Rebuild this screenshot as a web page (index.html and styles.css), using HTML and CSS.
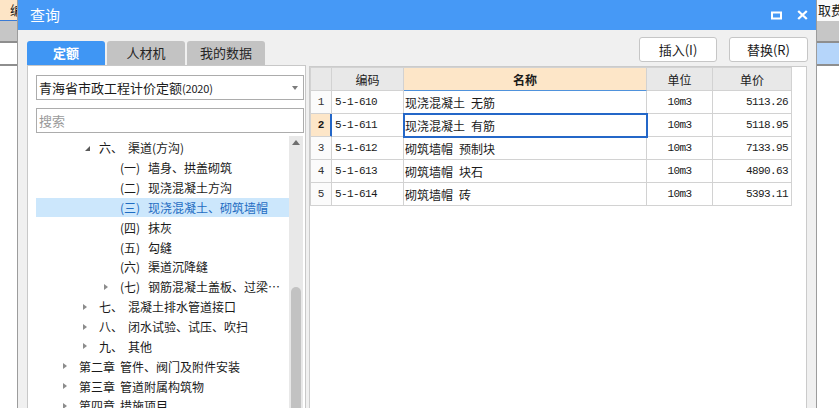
FILE: index.html
```html
<!DOCTYPE html>
<html lang="zh-CN">
<head>
<meta charset="utf-8">
<title>查询</title>
<link rel="stylesheet" href="styles.css">
</head>
<body>
<div class="app">
  <div class="app-head">
    <span class="app-head-l">编</span>
    <span class="app-head-r">取费</span>
  </div>
  <div class="app-band"></div>
  <div class="app-row"><span class="app-row-l"></span><span class="app-row-r"></span></div>
  <div class="app-rest"></div>
</div>

<div class="dialog">
  <div class="titlebar">
    <span class="title">查询</span>
    <span class="tb-icons">
      <svg class="ic-max" width="11" height="9" viewBox="0 0 11 9"><rect x="1" y="1.5" width="9" height="6" fill="none" stroke="#fff" stroke-width="2"/></svg>
      <svg class="ic-close" width="11" height="10" viewBox="0 0 11 10"><path d="M1.2 1 L9.8 9 M9.8 1 L1.2 9" stroke="#fff" stroke-width="2.3" fill="none"/></svg>
    </span>
  </div>
  <div class="dlg-body">
    <div class="toolbar">
      <div class="tabs">
        <div class="tab active">定额</div>
        <div class="tab">人材机</div>
        <div class="tab">我的数据</div>
      </div>
      <div class="buttons">
        <button class="btn btn-ins">插入(I)</button>
        <button class="btn btn-rep">替换(R)</button>
      </div>
    </div>
    <div class="main">
      <div class="left">
        <div class="combo"><span>青海省市政工程计价定额<span class="yr">(2020)</span></span><span class="caret"></span></div>
        <div class="search">搜索</div>
        <div class="tree-wrap">
          <ul class="tree">
            <li class="lv1"><span class="arr open"></span><span class="num">六、</span><span>渠道(方沟)</span></li>
            <li class="lv2"><span class="arr"></span><span class="num">(一)</span><span>墙身、拱盖砌筑</span></li>
            <li class="lv2"><span class="arr"></span><span class="num">(二)</span><span>现浇混凝土方沟</span></li>
            <li class="lv2 hl"><span class="arr"></span><span class="num">(三)</span><span>现浇混凝土、砌筑墙帽</span></li>
            <li class="lv2"><span class="arr"></span><span class="num">(四)</span><span>抹灰</span></li>
            <li class="lv2"><span class="arr"></span><span class="num">(五)</span><span>勾缝</span></li>
            <li class="lv2"><span class="arr"></span><span class="num">(六)</span><span>渠道沉降缝</span></li>
            <li class="lv2"><span class="arr closed"></span><span class="num">(七)</span><span>钢筋混凝土盖板、过梁…</span></li>
            <li class="lv1"><span class="arr closed"></span><span class="num">七、</span><span>混凝土排水管道接口</span></li>
            <li class="lv1"><span class="arr closed"></span><span class="num">八、</span><span>闭水试验、试压、吹扫</span></li>
            <li class="lv1"><span class="arr closed"></span><span class="num">九、</span><span>其他</span></li>
            <li class="lv0"><span class="arr closed"></span><span class="num">第二章</span><span>管件、阀门及附件安装</span></li>
            <li class="lv0"><span class="arr closed"></span><span class="num">第三章</span><span>管道附属构筑物</span></li>
            <li class="lv0"><span class="arr closed"></span><span class="num">第四章</span><span>措施项目</span></li>
          </ul>
          <div class="scrollbar"><span class="up"></span><span class="thumb"></span></div>
        </div>
      </div>
      <div class="right">
        <table class="grid">
          <colgroup><col class="c-no"><col class="c-code"><col class="c-name"><col class="c-unit"><col class="c-price"></colgroup>
          <thead>
            <tr><th></th><th>编码</th><th class="sel">名称</th><th>单位</th><th>单价</th></tr>
          </thead>
          <tbody>
            <tr><td class="no">1</td><td class="code">5-1-610</td><td class="name">现浇混凝土&#8194;无筋</td><td class="unit">10m3</td><td class="price">5113.26</td></tr>
            <tr class="cur"><td class="no">2</td><td class="code">5-1-611</td><td class="name selcell">现浇混凝土&#8194;有筋</td><td class="unit">10m3</td><td class="price">5118.95</td></tr>
            <tr><td class="no">3</td><td class="code">5-1-612</td><td class="name">砌筑墙帽&#8194;预制块</td><td class="unit">10m3</td><td class="price">7133.95</td></tr>
            <tr><td class="no">4</td><td class="code">5-1-613</td><td class="name">砌筑墙帽&#8194;块石</td><td class="unit">10m3</td><td class="price">4890.63</td></tr>
            <tr><td class="no">5</td><td class="code">5-1-614</td><td class="name">砌筑墙帽&#8194;砖</td><td class="unit">10m3</td><td class="price">5393.11</td></tr>
          </tbody>
        </table>
      </div>
    </div>
  </div>
</div>
</body>
</html>
```

FILE: styles.css
```css
* { box-sizing: border-box; margin: 0; padding: 0; }
html, body { width: 839px; height: 408px; overflow: hidden; }
body {
  position: relative;
  background: #fff;
  color: #1a1a1a;
  font-family: "Noto Sans CJK SC", "Noto Sans", sans-serif;
  font-size: 12px;
}

/* background application */
.app { display: flex; flex-direction: column; height: 408px; }
.app-head { display: flex; height: 21px; }
.app-head-l {
  width: 17px; background: #fde5c6; border-bottom: 1px solid #3a7bd5;
  font-size: 13px; line-height: 20px; padding-left: 10px; white-space: nowrap; overflow: hidden;
}
.app-head-r {
  margin-left: auto; width: 22px; overflow: hidden; white-space: nowrap;
  font-size: 13px; line-height: 20px; padding-left: 1px; background: #fafafa;
}
.app-band { height: 22px; background: #c6c6c6; border-bottom: 2px solid #8e8e8e; }
.app-row { display: flex; height: 23px; border-bottom: 2px solid #8e8e8e; }
.app-row-l { flex: 1; background: #fff; }
.app-row-r { width: 22px; background: #b5d5fa; }
.app-rest { flex: 1; background: #fff; }

/* dialog window */
.dialog {
  position: absolute; left: 17px; top: 0;
  width: 800px; height: 420px;
  border: 1px solid #9c9c9c; border-top: 0;
  background: #f0f0f0;
  display: flex; flex-direction: column;
}
.titlebar {
  height: 30px; flex: none;
  background: #4699f6; color: #fff;
  display: flex; align-items: center;
  padding: 0 8px 0 12px;
}
.title { font-size: 15px; line-height: 30px; }
.tb-icons { margin-left: auto; display: flex; align-items: center; gap: 15px; }

.dlg-body { flex: 1; display: flex; flex-direction: column; }
.toolbar {
  height: 35px; flex: none;
  display: flex; justify-content: space-between;
  padding: 0 8px 0 9px;
}
.tabs { display: flex; gap: 2px; align-self: flex-end; }
.tab {
  width: 78px; height: 24px;
  border-radius: 3px 3px 0 0;
  background: #c3c3c3; color: #262626;
  font-size: 13px; line-height: 24px; text-align: center;
}
.tab.active { background: #3f96f4; color: #fff; font-weight: bold; }
.buttons { display: flex; gap: 12px; margin-top: 7px; }
.btn {
  height: 25px; width: 78px;
  background: #fff; border: 1px solid #c6c6c6; border-radius: 3px;
  font-family: inherit; font-size: 13px; color: #1a1a1a;
}
.btn-rep { width: 79px; }

.main { flex: 1; display: flex; gap: 3px; padding: 0 9px; min-height: 0; }

/* left tree panel */
.left {
  width: 279px; flex: none;
  background: #fff; border: 1px solid #c8c8c8; border-bottom: 0;
  padding: 9px 1px 0 8px;
  display: flex; flex-direction: column;
}
.combo {
  height: 25px; border: 1px solid #acacac;
  display: flex; align-items: center; justify-content: space-between;
  padding: 0 5px 0 2px;
  font-size: 13px; color: #1a1a1a;
}
.yr { font-size: 11px; letter-spacing: -0.2px; }
.caret {
  width: 0; height: 0;
  border-top: 4px solid #7c7c7c;
  border-left: 3.5px solid transparent; border-right: 3.5px solid transparent;
}
.search {
  height: 25px; margin-top: 8px; border: 1px solid #acacac;
  padding-left: 2px; font-size: 13px; line-height: 23px; color: #9a9a9a;
}
.tree-wrap { flex: 1; display: flex; margin-top: 3px; min-height: 0; }
.tree { list-style: none; width: 253px; padding-top: 2px; }
.tree li {
  height: 19.85px; display: flex; align-items: center; white-space: nowrap;
  font-size: 12px; color: #1a1a1a;
}
.tree li.lv0 { padding-left: 27px; }
.tree li.lv1 { padding-left: 47px; }
.tree li.lv2 { padding-left: 68px; }
.tree li.hl { background: #cce7fc; color: #1e6cc2; }
.arr { width: 16px; flex: none; display: flex; align-items: center; }
.arr.closed::before {
  content: ""; width: 0; height: 0;
  border-left: 4px solid #8c8c8c;
  border-top: 3.5px solid transparent; border-bottom: 3.5px solid transparent;
}
.arr.open::before {
  content: ""; width: 0; height: 0; margin-left: 2px; margin-top: 2px;
  border-bottom: 5px solid #5a5a5a; border-left: 5px solid transparent;
}
.lv0 .num { width: 41px; }
.lv1 .num { width: 29px; }
.lv2 .num { width: 28px; }
.num { display: inline-block; flex: none; }

.scrollbar {
  width: 14px; flex: none; background: #e8e8e8;
  display: flex; flex-direction: column; align-items: center;
}
.scrollbar .up {
  margin-top: 4px; width: 0; height: 0;
  border-bottom: 5px solid #6e6e6e;
  border-left: 4px solid transparent; border-right: 4px solid transparent;
}
.scrollbar .thumb {
  margin-top: 142px; width: 10px; height: 200px;
  background: #c2c2c2; border-radius: 5px;
}

/* right grid panel */
.right {
  flex: 1; margin-top: 1px;
  background: #fff; border: 1px solid #cbcbcb; border-bottom: 0;
}
.grid {
  table-layout: fixed; border-spacing: 0;
  width: 482px;
  border-left: 1px solid #d2d2d2; border-top: 1px solid #d2d2d2;
  font-size: 12px;
}
.c-no { width: 21px; }
.c-code { width: 72px; }
.c-name { width: 243px; }
.c-unit { width: 66px; }
.c-price { width: 79px; }
.grid th, .grid td {
  height: 23px; padding: 0;
  border-right: 1px solid #d2d2d2; border-bottom: 1px solid #d2d2d2;
  white-space: nowrap; overflow: hidden;
}
.grid th { background: #e8e8e8; font-weight: normal; text-align: center; color: #1a1a1a; }
.grid th.sel { background: #fde6c8; font-weight: bold; border-bottom: 1px solid #4f92dc; }
.grid td.no {
  background: #fbfbfb; text-align: center;
  font-family: "Liberation Mono", monospace; font-size: 11px; color: #333;
}
.grid tr.cur td.no {
  background: #fde6c8; font-weight: bold; color: #1a1a1a;
  border-right-color: #2467c8; box-shadow: inset -1px 0 0 #2467c8;
}
.grid td.code, .grid td.unit, .grid td.price {
  font-family: "Liberation Mono", monospace; font-size: 11px; letter-spacing: -0.6px;
}
.grid td.code { padding-left: 3px; }
.grid td.name { padding-left: 1px; }
.grid td.unit { text-align: center; }
.grid td.price { text-align: right; padding-right: 3px; }
.grid td.selcell { outline: 2px solid #2467c8; outline-offset: -1px; }
```
